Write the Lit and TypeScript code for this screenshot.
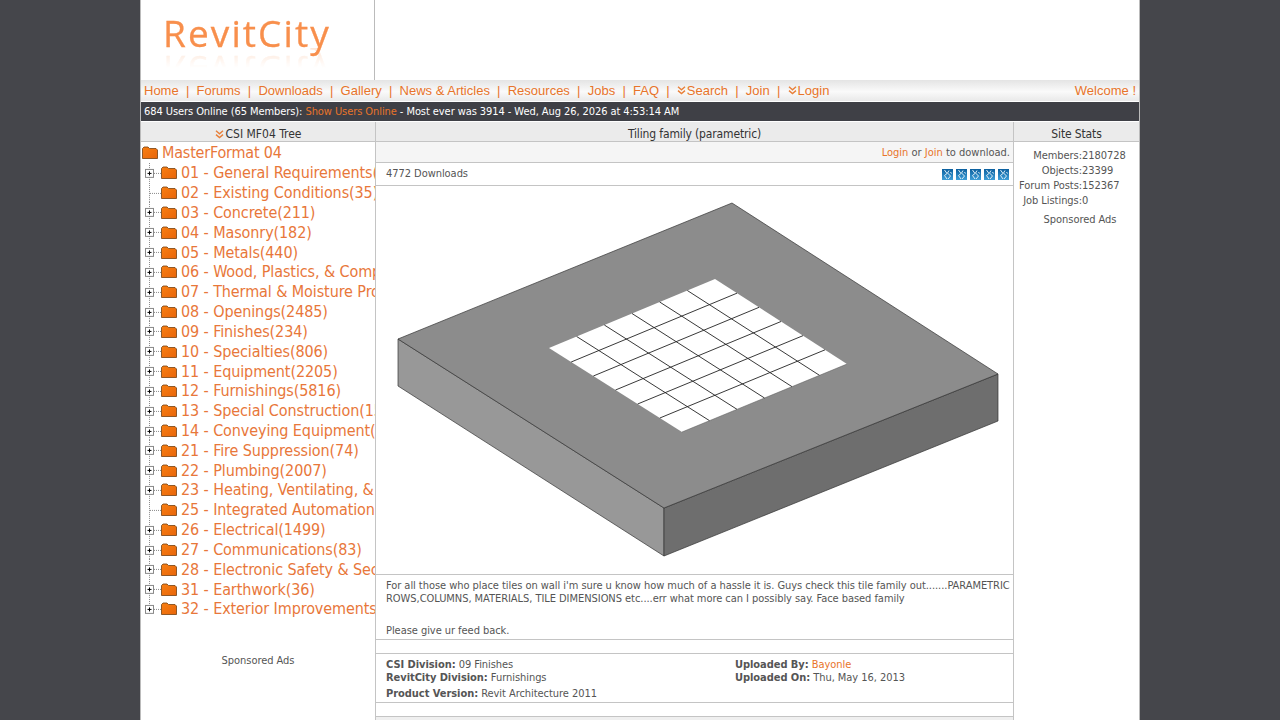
import { LitElement, html, css, svg } from "lit";
import { customElement } from "lit/decorators.js";

const TREE: [string, boolean][] = [
  ["01 - General Requirements(122)", true],
  ["02 - Existing Conditions(35)", false],
  ["03 - Concrete(211)", true],
  ["04 - Masonry(182)", true],
  ["05 - Metals(440)", true],
  ["06 - Wood, Plastics, & Composites(1049)", true],
  ["07 - Thermal & Moisture Protection(417)", true],
  ["08 - Openings(2485)", true],
  ["09 - Finishes(234)", true],
  ["10 - Specialties(806)", true],
  ["11 - Equipment(2205)", true],
  ["12 - Furnishings(5816)", true],
  ["13 - Special Construction(157)", true],
  ["14 - Conveying Equipment(103)", true],
  ["21 - Fire Suppression(74)", true],
  ["22 - Plumbing(2007)", true],
  ["23 - Heating, Ventilating, & Air Conditioning(1180)", true],
  ["25 - Integrated Automation(12)", false],
  ["26 - Electrical(1499)", true],
  ["27 - Communications(83)", true],
  ["28 - Electronic Safety & Security(64)", true],
  ["31 - Earthwork(36)", true],
  ["32 - Exterior Improvements(420)", true],
];

const chevrons = html`<svg class="chev" viewBox="0 0 9 9" width="9" height="9">
  <path d="M1 .8l3.5 3L8 .8M1 4.600l3.500 3 3.500-3" fill="none" stroke="#e8803a" stroke-width="1.4"/>
</svg>`;

const folder = html`<svg class="folder" viewBox="0 0 16 13" width="16" height="13">
  <defs>
    <linearGradient id="fg" x1="0" y1="0" x2="1" y2="1">
      <stop offset="0" stop-color="#f87f12"/>
      <stop offset="1" stop-color="#e8650a"/>
    </linearGradient>
  </defs>
  <path d="M.5 12.500V2.500L2 1h4l1.500 1.500H14l1.500 1.500v8.500z" fill="url(#fg)" stroke="#75400f" stroke-width=".8"/>
</svg>`;

function gridLines() {
  const T = [715, 279], L = [549, 348], R = [847, 364], B = [682, 432];
  const mix = (a: number[], b: number[], t: number) => [a[0] + (b[0] - a[0]) * t, a[1] + (b[1] - a[1]) * t];
  const out = [];
  for (let i = 1; i < 6; i++) {
    const a = mix(L, T, i / 6), b = mix(B, R, i / 6);
    const c = mix(L, B, i / 6), d = mix(T, R, i / 6);
    out.push(svg`<line x1=${a[0]} y1=${a[1]} x2=${b[0]} y2=${b[1]}/>`);
    out.push(svg`<line x1=${c[0]} y1=${c[1]} x2=${d[0]} y2=${d[1]}/>`);
  }
  return out;
}

@customElement("app-root")
export class AppRoot extends LitElement {
  static styles = css`
    :host {
      display: block;
      height: 720px;
      overflow: hidden;
      background: #45464b;
      font-family: "DejaVu Sans Condensed", "DejaVu Sans", sans-serif;
      font-size: 11px;
      letter-spacing: -0.05px;
      color: #555;
    }
    a { color: #e8742a; text-decoration: none; }
    .page {
      width: 998px;
      height: 720px;
      margin: 0 auto;
      background: #fff;
      border-left: 1px solid #bbb;
      border-right: 1px solid #bbb;
      overflow: hidden;
    }
    .head { height: 80px; display: flex; }
    .logo-cell {
      width: 211px;
      border-right: 1px solid #bbb;
      padding: 11px 0 0 22px;
    }
    .logo {
      font-family: "Open Sans", sans-serif;
      font-size: 37px;
      line-height: 44px;
      letter-spacing: 2.1px;
      color: #f88f4c;
      display: inline-block;
      -webkit-text-stroke: .3px #f88f4c;
      -webkit-box-reflect: below -7px linear-gradient(transparent 55%, rgba(255,255,255,.22));
    }
    .nav {
      height: 21px;
      display: flex;
      justify-content: space-between;
      align-items: center;
      padding: 0 3px;
      background: linear-gradient(#e4e4e4, #fafafa 55%, #e9e9e9);
      font-family: "Liberation Sans", Arial, sans-serif;
      font-size: 13px;
      letter-spacing: 0;
      color: #e8742a;
    }
    .nav .sep { margin: 0 7.22px; }
    .nav .chev { margin-right: 1px; vertical-align: 0; }
    .bar {
      height: 19px;
      margin-top: 1px;
      line-height: 19px;
      background: #3f4046;
      color: #fff;
      padding-left: 3px;
      white-space: nowrap;
      letter-spacing: -0.075px;
    }
    .cols {
      display: grid;
      grid-template-columns: 234px 639px 125px;
      margin-top: 1px;
    }
    .cols > div { min-width: 0; }
    .title {
      height: 19px;
      line-height: 24px;
      background: #ebebeb;
      border-bottom: 1px solid #c4c4c4;
      text-align: center;
      font-size: 12px;
      letter-spacing: -0.14px;
      color: #333;
      overflow: hidden;
    }
    .left .title { letter-spacing: 0; }
    .title .chev { margin-right: 2px; vertical-align: -1px; }
    .left { overflow: hidden; }
    .tree {
      font-size: 16px;
      letter-spacing: -0.1px;
      color: #e8773a;
      padding-top: 1px;
      white-space: nowrap;
    }
    .row {
      height: 19.83px;
      display: flex;
      align-items: center;
    }
    .row.root { padding-left: 1px; letter-spacing: -0.2px; }
    .root .folder { margin-right: 4px; }
    .conn { width: 20px; height: 100%; flex: none; display: block; }
    .item .folder { margin-right: 4px; flex: none; }
    .label { flex: none; }
    .left-ads { text-align: center; margin-top: 35px; color: #555; }
    .center { border-left: 1px solid #c4c4c4; border-right: 1px solid #c4c4c4; }
    .login {
      height: 20px;
      line-height: 22px;
      background: #f5f5f5;
      text-align: right;
      padding-right: 3px;
      border-bottom: 1px solid #c4c4c4;
      letter-spacing: 0;
    }
    .dl {
      border-bottom: 1px solid #c4c4c4;
      display: flex;
      justify-content: space-between;
      align-items: center;
      padding: 0 4px 2px 10px;
      box-sizing: border-box;
      height: 23px;
    }
    .stars { display: flex; gap: 3px; padding-top: 2px; }
    .pic { height: 388px; border-bottom: 1px solid #c4c4c4; }
    .pic svg { display: block; }
    .desc {
      height: 65px;
      box-sizing: border-box;
      padding: 4px 0 0 10px;
      line-height: 13px;
      border-bottom: 1px solid #c4c4c4;
    }
    .desc p { margin: 0; }
    .desc p + p { margin-top: 19px; }
    .gap { height: 13px; border-bottom: 1px solid #c4c4c4; }
    .details {
      height: 44px;
      padding: 4px 0 0 10px;
      border-bottom: 1px solid #c4c4c4;
      display: grid;
      grid-template-columns: 349px 1fr;
      grid-auto-rows: 13px;
      line-height: 13px;
    }
    .details .pv { margin-top: 3px; grid-column: 1 / 3; }
    .foot { height: 13px; border-bottom: 1px solid #c4c4c4; }
    .band { height: 10px; background: #efefef; }
    .stats {
      display: grid;
      grid-template-columns: 63px auto;
      justify-content: start;
      padding: 6px 0 0 5px;
      grid-auto-rows: 15px;
      line-height: 15px;
    }
    .stats span:nth-child(odd) { text-align: right; white-space: nowrap; }
    .right-ads { text-align: center; margin-top: 4px; padding-left: 7px; line-height: 15px; }
  `;

  private star() {
    return html`<svg viewBox="0 0 11 11" width="11" height="11">
      <defs>
        <linearGradient id="sg" x1="0" y1="0" x2="0" y2="1">
          <stop offset="0" stop-color="#0b5f9e"/>
          <stop offset="1" stop-color="#3f9fd8"/>
        </linearGradient>
      </defs>
      <rect width="11" height="11" fill="url(#sg)"/>
      <path d="M2.500 1l2.500 3.500-2.500 2 2.500 3.500M7 1.500L5.500 4l3 3-2.500 3M8.500 3l1 1.500" fill="none" stroke="#dcecf6" stroke-width="1"/>
    </svg>`;
  }

  render() {
    const sep = html`<span class="sep">|</span>`;
    return html`
      <div class="page">
        <div class="head"><div class="logo-cell"><span class="logo">RevitCity</span></div></div>
        <div class="nav">
          <div>
            <a>Home</a>${sep}<a>Forums</a>${sep}<a>Downloads</a>${sep}<a>Gallery</a>${sep}<a>News &amp; Articles</a>${sep}<a>Resources</a>${sep}<a>Jobs</a>${sep}<a>FAQ</a>${sep}<a>${chevrons}Search</a>${sep}<a>Join</a>${sep}<a>${chevrons}Login</a>
          </div>
          <div>Welcome !</div>
        </div>
        <div class="bar">684 Users Online (65 Members): <a>Show Users Online</a> - Most ever was 3914 - Wed, Aug 26, 2026 at 4:53:14 AM</div>
        <div class="cols">
          <div class="left">
            <div class="title">${chevrons}CSI MF04 Tree</div>
            <div class="tree">
              <div class="row root">${folder}<span class="label">MasterFormat 04</span></div>
              ${TREE.map(([t, exp], i) => html`
                <div class="row item">
                  <svg class="conn" viewBox="0 0 20 20" preserveAspectRatio="none">
                    <path d="M8.500 0V${i === TREE.length - 1 ? 10 : 20}" stroke="#888" stroke-dasharray="1 1" fill="none"/>
                    <path d="M9 10.500H20" stroke="#888" stroke-dasharray="1 1" fill="none"/>
                    ${exp ? svg`<rect x="4.500" y="6.500" width="8" height="8" fill="#fff" stroke="#888"/>
                      <path d="M6.500 10.500h4M8.500 8.500v4" stroke="#000"/>` : ""}
                  </svg>
                  ${folder}<span class="label">${t}</span>
                </div>`)}
            </div>
            <div class="left-ads">Sponsored Ads</div>
          </div>
          <div class="center">
            <div class="title">Tiling family (parametric)</div>
            <div class="login"><a>Login</a> or <a>Join</a> to download.</div>
            <div class="dl"><span>4772 Downloads</span><span class="stars">${[1, 2, 3, 4, 5].map(() => this.star())}</span></div>
            <div class="pic">
              <svg viewBox="376 186 637 388" width="637" height="388">
                <polygon points="398,339 664,508 664,556 398,386" fill="#989898" stroke="#333" stroke-width=".7"/>
                <polygon points="664,508 998,374 998,421 664,556" fill="#6e6e6e" stroke="#333" stroke-width=".7"/>
                <polygon points="732,203 998,374 664,508 398,339" fill="#8c8c8c" stroke="#333" stroke-width=".7"/>
                <polygon points="715,279 847,364 682,432 549,348" fill="#fff"/>
                <g stroke="#222" stroke-width=".9">${gridLines()}</g>
                <line x1="682" y1="432" x2="847" y2="364" stroke="#555" stroke-width=".5"/>
              </svg>
            </div>
            <div class="desc">
              <p>For all those who place tiles on wall i'm sure u know how much of a hassle it is. Guys check this tile family out.......PARAMETRIC ROWS,COLUMNS, MATERIALS, TILE DIMENSIONS etc....err what more can I possibly say. Face based family</p>
              <p>Please give ur feed back.</p>
            </div>
            <div class="gap"></div>
            <div class="details">
              <div><b>CSI Division:</b> 09 Finishes</div>
              <div><b>Uploaded By:</b> <a>Bayonle</a></div>
              <div><b>RevitCity Division:</b> Furnishings</div>
              <div><b>Uploaded On:</b> Thu, May 16, 2013</div>
              <div class="pv"><b>Product Version:</b> Revit Architecture 2011</div>
            </div>
            <div class="foot"></div>
            <div class="band"></div>
          </div>
          <div class="right">
            <div class="title">Site Stats</div>
            <div class="stats">
              <span>Members:</span><span>2180728</span>
              <span>Objects:</span><span>23399</span>
              <span>Forum Posts:</span><span>152367</span>
              <span>Job Listings:</span><span>0</span>
            </div>
            <div class="right-ads">Sponsored Ads</div>
          </div>
        </div>
      </div>
    `;
  }
}
